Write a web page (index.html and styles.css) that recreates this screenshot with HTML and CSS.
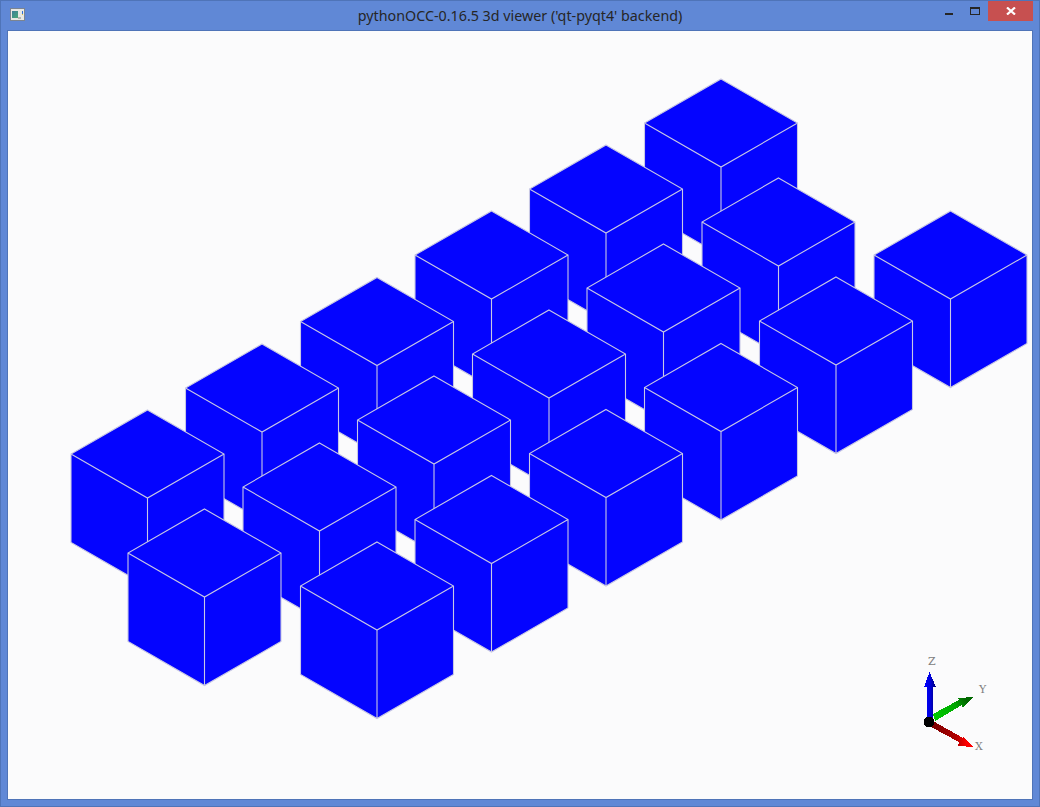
FILE: index.html
```html
<!DOCTYPE html>
<html lang="en">
<head>
<meta charset="utf-8">
<title>pythonOCC-0.16.5 3d viewer</title>
<link rel="stylesheet" href="styles.css">
</head>
<body>
<div class="window">
  <header class="titlebar">
    <div class="app-icon">
      <span class="app-icon-pic"></span>
      <span class="app-icon-tiny"></span>
      <span class="app-icon-bar"></span>
    </div>
    <div class="title">pythonOCC-0.16.5 3d viewer ('qt-pyqt4' backend)</div>
    <div class="controls">
      <div class="ctl ctl-min"><span class="min-glyph"></span></div>
      <div class="ctl ctl-max"><span class="max-glyph"></span></div>
      <div class="ctl-close">
        <svg class="close-glyph" width="10" height="8" viewBox="0 0 10 8"><path d="M1 0.5L9 7.5M9 0.5L1 7.5" stroke="#fff" stroke-width="2.2" fill="none"/></svg>
      </div>
    </div>
  </header>
  <main class="viewport">
    <svg class="scene" width="1024" height="768" viewBox="8 31 1024 768">
      <defs>
        <g id="cube">
          <path class="cube-fill" d="M0 0L76.5 44V132.5L0 176.5L-76.5 132.5V44Z"/>
          <path class="cube-edge" d="M0 0L76.5 44V132.5L0 176.5L-76.5 132.5V44ZM-76.5 44L0 88L76.5 44M0 88V176.5"/>
        </g>
        <linearGradient id="gz" x1="0" y1="0" x2="1" y2="0">
          <stop offset="0" stop-color="#0000ff"/><stop offset="0.5" stop-color="#0000e0"/><stop offset="1" stop-color="#000070"/>
        </linearGradient>
        <linearGradient id="gy" x1="0" y1="1" x2="1" y2="0.6">
          <stop offset="0" stop-color="#00d000"/><stop offset="0.7" stop-color="#00a800"/><stop offset="1" stop-color="#006800"/>
        </linearGradient>
        <linearGradient id="gx" x1="0" y1="0" x2="1" y2="0">
          <stop offset="0" stop-color="#780000"/><stop offset="0.6" stop-color="#b00000"/><stop offset="0.85" stop-color="#ff0000"/><stop offset="1" stop-color="#ff0000"/>
        </linearGradient>
      </defs>
      <use href="#cube" x="721" y="79"/>
      <use href="#cube" x="606" y="145"/>
      <use href="#cube" x="778.5" y="178"/>
      <use href="#cube" x="491.5" y="211"/>
      <use href="#cube" x="950.5" y="211"/>
      <use href="#cube" x="663.5" y="244"/>
      <use href="#cube" x="377" y="277.5"/>
      <use href="#cube" x="836" y="277"/>
      <use href="#cube" x="549" y="310"/>
      <use href="#cube" x="721" y="343.5"/>
      <use href="#cube" x="262" y="344"/>
      <use href="#cube" x="434" y="376"/>
      <use href="#cube" x="606" y="409.5"/>
      <use href="#cube" x="147.5" y="410"/>
      <use href="#cube" x="319.5" y="443"/>
      <use href="#cube" x="491.5" y="475.5"/>
      <use href="#cube" x="204.5" y="509"/>
      <use href="#cube" x="377" y="542"/>

      <path class="axis" fill="url(#gz)" d="M927 722V687H924L929.5 672L936 687H933V722Z"/>
      <path class="axis" fill="url(#gy)" d="M933 714L959 700L958 698L973 697L963 708L962 705L935 721Z"/>
      <path class="axis" fill="url(#gx)" d="M933 721L963 738L963 736L973 747L958 746L959 742L931 727Z"/>
      <circle class="axis axis-o" cx="929" cy="722" r="5.5"/>
      <text class="axis-label" x="928" y="665">Z</text>
      <text class="axis-label" x="979" y="693">Y</text>
      <text class="axis-label" x="975" y="750">X</text>
    </svg>
  </main>
</div>
</body>
</html>
```

FILE: styles.css
```css
* { box-sizing: border-box; }
html, body { margin: 0; padding: 0; }
body { width: 1040px; height: 807px; overflow: hidden; }

.window {
  width: 1040px;
  height: 807px;
  display: flex;
  flex-direction: column;
  background: #6088d6;
  border: 1px solid #4f74b8;
  padding: 0 6px 6px;
}

.titlebar {
  height: 29px;
  flex: none;
  display: grid;
  grid-template-columns: 1fr auto 1fr;
  align-items: start;
}

.app-icon {
  margin-top: 7px;
  margin-left: 3px;
  width: 15px;
  height: 13px;
  background: #e8e8e4;
  border: 1px solid #7c8490;
  position: relative;
}
.app-icon-pic {
  position: absolute;
  left: 1px;
  top: 2px;
  width: 6px;
  height: 7px;
  background: linear-gradient(135deg, #3c7f9a, #48a878);
}
.app-icon-tiny {
  position: absolute;
  left: 7px;
  top: 8px;
  width: 3px;
  height: 2px;
  background: #b4b4b0;
}
.app-icon-bar {
  position: absolute;
  left: 11px;
  top: 2px;
  width: 1px;
  height: 4px;
  background: linear-gradient(#2f6fd8 70%, #e0c040 70%);
}

.title {
  font-family: "Noto Sans", sans-serif;
  font-size: 14.3px;
  line-height: 20px;
  padding-top: 5px;
  color: #262626;
  white-space: nowrap;
}

.controls {
  display: flex;
  justify-content: flex-end;
  align-items: flex-start;
}
.ctl { height: 20px; display: flex; justify-content: center; }
.ctl-min { width: 27px; }
.ctl-max { width: 26px; }
.min-glyph { width: 8px; height: 2px; background: #262626; margin-top: 12px; }
.max-glyph { width: 10px; height: 8px; border: 1px solid #262626; border-top-width: 2px; margin-top: 6px; }
.ctl-close {
  width: 45px;
  height: 20px;
  background: #c75050;
  display: flex;
  align-items: center;
  justify-content: center;
}

.viewport {
  flex: none;
  width: 1026px;
  height: 770px;
  background: #fbfbfc;
  border: 1px solid #4f74b8;
}
.scene { display: block; }

.cube-fill { fill: #0404ff; }
.cube-edge { fill: none; stroke: #c8c8e4; stroke-width: 1.1; }

.axis { shape-rendering: crispEdges; }
.axis-o { fill: #000; }
.axis-label {
  font-family: "DejaVu Serif", serif;
  font-size: 11px;
  fill: #808080;
}
```
